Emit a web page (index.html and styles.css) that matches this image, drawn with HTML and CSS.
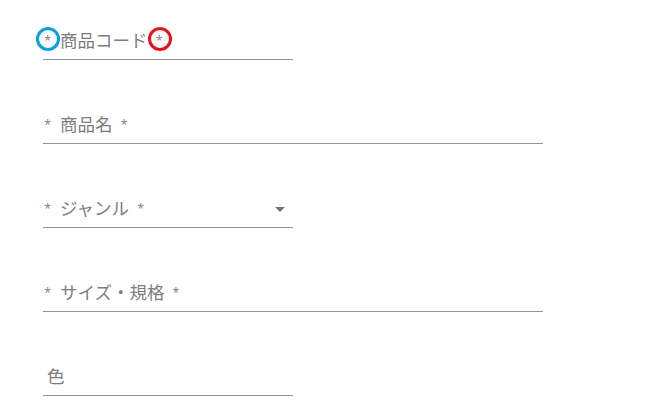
FILE: index.html
```html
<!DOCTYPE html>
<html lang="ja">
<head>
<meta charset="utf-8">
<link rel="stylesheet" href="styles.css">
</head>
<body>
<form class="form">
  <div class="field short">
    <label class="label"><span class="ast">*</span><span class="txt">商品コード</span><span class="ast">*</span></label>
    <span class="mark mark-blue"></span>
    <span class="mark mark-red"></span>
  </div>
  <div class="field long">
    <label class="label"><span class="ast">*</span><span class="txt">商品名</span><span class="ast">*</span></label>
  </div>
  <div class="field short select">
    <label class="label"><span class="ast">*</span><span class="txt">ジャンル</span><span class="ast">*</span></label>
    <svg class="arrow" viewBox="0 0 24 24" width="24" height="24"><path d="M7 10l5 5 5-5z"/></svg>
  </div>
  <div class="field long">
    <label class="label"><span class="ast">*</span><span class="txt">サイズ・規格</span><span class="ast">*</span></label>
  </div>
  <div class="field short">
    <label class="label"><span class="txt">色</span></label>
  </div>
</form>
</body>
</html>
```
FILE: styles.css
```css
html, body {
  margin: 0;
  padding: 0;
  background: #ffffff;
}
body {
  font-family: "Noto Sans CJK JP", "Noto Sans", sans-serif;
  color: #7d7d7d;
}
.form {
  display: flex;
  flex-direction: column;
  gap: 24px;
  padding-left: 43px;
}
.field {
  position: relative;
  height: 59px;
  border-bottom: 1px solid #949494;
  display: flex;
  align-items: flex-end;
  box-sizing: content-box;
}
.short { width: 250px; }
.long { width: 500px; }
.label {
  display: flex;
  align-items: flex-start;
  font-size: 17.5px;
  line-height: 24px;
  padding-bottom: 7px;
  color: #7d7d7d;
  white-space: nowrap;
}
.txt {
  margin-left: 4px;
  margin-right: 7px;
}
.ast {
  font-family: "Liberation Sans", "Noto Sans", sans-serif;
  font-size: 16px;
  line-height: 24px;
  width: 9px;
  text-align: center;
  color: #888888;
  transform: translateY(2px);
}
.ast:first-child {
  margin-left: 0px;
  margin-right: 4px;
}
.arrow {
  position: absolute;
  right: 1px;
  bottom: 6px;
  fill: #757575;
}
.mark {
  position: absolute;
  width: 18px;
  height: 18px;
  border-radius: 50%;
  border: 3px solid;
  top: 27px;
}
.mark-blue {
  border-color: #0b9fe0;
  left: -7px;
}
.mark-red {
  border-color: #e3141c;
  left: 105px;
}
```
